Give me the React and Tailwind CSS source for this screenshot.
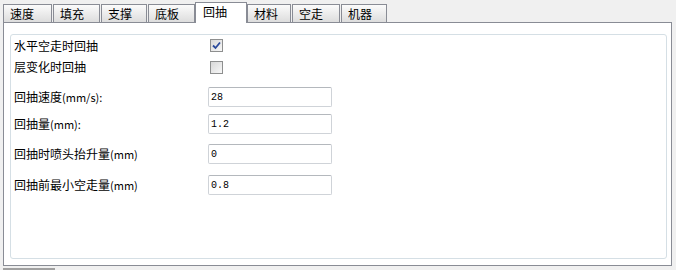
import { useState } from 'react';

const tabs = [
  { label: '速度', cls: 'w-[49px]' },
  { label: '填充', cls: 'ml-[1px] w-[47px]' },
  { label: '支撑', cls: 'ml-[1px] w-[46px]' },
  { label: '底板', cls: 'ml-[1px] w-[47px]' },
  { label: '回抽', cls: 'w-[52px]', active: true },
  { label: '材料', cls: 'w-[44px]' },
  { label: '空走', cls: 'ml-[1px] w-[48px]' },
  { label: '机器', cls: 'ml-[1px] w-[46px]' },
];

const fields = [
  { label: '回抽速度', unit: '(mm/s):', value: '28', gap: 'mt-[9px]' },
  { label: '回抽量', unit: '(mm):', value: '1.2', gap: 'mt-[7px]' },
  { label: '回抽时喷头抬升量', unit: '(mm)', value: '0', gap: 'mt-[10px]' },
  { label: '回抽前最小空走量', unit: '(mm)', value: '0.8', gap: 'mt-[11px]' },
];

const Checkbox = ({ checked, onToggle }) => (
  <button
    onClick={onToggle}
    className="ml-[1px] w-[13px] h-[13px] border border-[#8e8f8f] bg-linear-to-br from-[#d8d8d8] to-[#f8f8f8] flex items-center justify-center p-0"
  >
    {checked && (
      <svg width="9" height="9" viewBox="0 0 9 9">
        <path d="M1 4.5 L3.5 7 L8 1.5" fill="none" stroke="#2a4a9c" strokeWidth="1.8" />
      </svg>
    )}
  </button>
);

export default function App() {
  const [travelRetract, setTravelRetract] = useState(true);
  const [layerRetract, setLayerRetract] = useState(false);

  return (
    <div
      className="w-[676px] h-[270px] bg-[#f0f0f0] overflow-hidden pt-[2px] text-black"
      style={{ fontFamily: '"Noto Sans CJK SC", "Liberation Sans", sans-serif' }}
    >
      <div className="flex items-end h-[20px] pl-[3px]">
        {tabs.map((t) =>
          t.active ? (
            <div
              key={t.label}
              className={`${t.cls} relative z-10 h-[21px] -mb-[1px] bg-white border border-b-0 border-[#898c95] pl-[7px] text-[12px] leading-[17px]`}
            >
              {t.label}
            </div>
          ) : (
            <div
              key={t.label}
              className={`${t.cls} h-[18px] bg-linear-to-b from-[#fbfbfb] to-[#dddddd] border border-b-0 border-[#898c95] pl-[6px] text-[12px] leading-[17px]`}
            >
              {t.label}
            </div>
          )
        )}
      </div>

      <div className="ml-[3px] w-[669px] h-[244px] border border-[#898c95] bg-white pl-[6px] pt-[11px]">
        <div className="w-[657px] h-[225px] border border-[#d5dfe5] rounded-[3px] pl-[3px] text-[12px]">
          <div className="flex items-center h-[21px]">
            <span className="w-[195px]">水平空走时回抽</span>
            <Checkbox checked={travelRetract} onToggle={() => setTravelRetract(!travelRetract)} />
          </div>
          <div className="flex items-center h-[22px]">
            <span className="w-[195px]">层变化时回抽</span>
            <Checkbox checked={layerRetract} onToggle={() => setLayerRetract(!layerRetract)} />
          </div>

          {fields.map((f) => (
            <div key={f.label} className={`${f.gap} flex items-center h-[20px]`}>
              <span className="w-[194px] whitespace-nowrap">
                {f.label}
                <span className="text-[11px]">{f.unit}</span>
              </span>
              <input
                defaultValue={f.value}
                className="w-[124px] h-[20px] border border-[#cfd3d8] border-t-[#b4b8bd] rounded-[2px] px-[2px] text-[10px] outline-none"
                style={{ fontFamily: '"Liberation Mono", monospace' }}
              />
            </div>
          ))}
        </div>
      </div>

      <div className="mt-[2px] ml-[3px] w-[52px] h-[2px] bg-[#a0a0a0]" />
    </div>
  );
}
